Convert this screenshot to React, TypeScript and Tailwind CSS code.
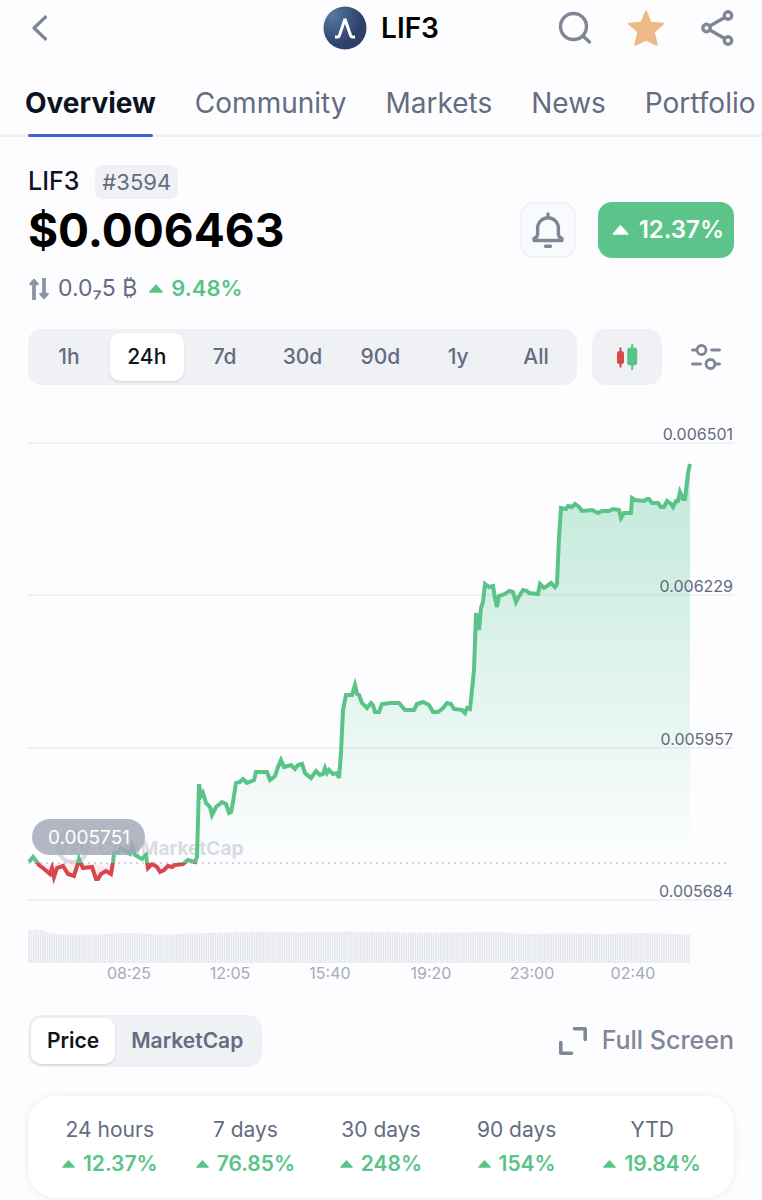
import { useState } from 'react';

const GREEN = '#5ac488';
const RED = '#d9474b';
const BASELINE = 863;

const tabs = ['Overview', 'Community', 'Markets', 'News', 'Portfolio'];
const ranges = ['1h', '24h', '7d', '30d', '90d', '1y', 'All'];

const gridLines = [
  { y: 443, label: '0.006501' },
  { y: 595, label: '0.006229' },
  { y: 748, label: '0.005957' },
  { y: 900, label: '0.005684' },
];

const times = [
  { x: 129, label: '08:25' },
  { x: 230, label: '12:05' },
  { x: 330, label: '15:40' },
  { x: 431, label: '19:20' },
  { x: 532, label: '23:00' },
  { x: 633, label: '02:40' },
];

const performance = [
  { period: '24 hours', change: '12.37%' },
  { period: '7 days', change: '76.85%' },
  { period: '30 days', change: '248%' },
  { period: '90 days', change: '154%' },
  { period: 'YTD', change: '19.84%' },
];

const points =
  '29,862 33,857 37,862 39,865 43,868 50,874 52,868 54,877 57,868 63,866 68,874 74,876 78,863 79,859 81,864 83,868 92,867 96,879 98,879 101,874 106,871 111,874 113,862 114,853 118,852 121,848 125,851 130,854 132,846 135,855 142,859 146,855 147,862 148,868 152,864 157,867 160,872 164,870 168,866 172,867 175,865 183,864 188,860 195,862 197,857 ' +
  '199,784 201,796 203,793 206,803 210,807 212,815 216,807 222,802 226,804 229,813 231,812 233,802 236,783 240,782 243,779 247,783 254,780 256,772 267,772 270,780 275,776 278,767 281,760 284,767 291,765 295,769 298,765 302,764 305,773 311,778 316,771 320,775 323,774 325,768 327,773 329,770 333,774 337,773 339,778 341,753 343,710 346,695 352,695 355,685 357,694 359,695 362,703 367,708 371,703 373,705 375,712 379,712 382,704 390,703 399,703 405,710 414,710 417,704 423,702 429,705 433,712 438,712 443,708 447,703 451,704 454,709 462,710 465,713 467,708 470,709 472,690 474,670 ' +
  '476,613 479,630 481,608 483,602 485,584 489,587 493,586 495,598 497,607 499,596 505,594 509,591 513,592 516,602 518,598 523,590 527,591 529,593 538,594 540,584 544,588 547,586 551,583 555,587 557,584 559,537 561,508 566,509 568,506 572,507 575,504 579,507 582,511 592,510 598,513 602,511 609,511 613,509 619,510 621,518 624,513 631,513 632,498 635,500 644,501 647,499 649,499 652,503 658,503 661,507 664,507 667,501 671,504 673,507 676,501 678,501 680,492 683,499 685,499 688,473 690,464';

const area = `29,${BASELINE} ${points} 690,${BASELINE}`;

const volumeProfile = [
  [28, 930], [44, 930], [48, 933], [60, 934.5], [90, 934.5], [125, 933], [165, 934.5], [205, 933], [265, 931.5],
  [300, 932.5], [345, 931.5], [400, 932.5], [470, 932.5], [490, 931.5], [525, 934], [560, 933.5], [610, 934], [640, 933], [690, 934.5],
];

function volumeTop(x: number) {
  for (let i = 1; i < volumeProfile.length; i++) {
    const [x0, y0] = volumeProfile[i - 1];
    const [x1, y1] = volumeProfile[i];
    if (x <= x1) return y0 + ((y1 - y0) * (x - x0)) / (x1 - x0);
  }
  return 934;
}

const bars = Array.from({ length: 288 }, (_, i) => 28.3 + i * 2.3);

function UpArrow({ className }: { className: string }) {
  return (
    <svg viewBox="0 0 16 10" className={className} fill="currentColor" aria-hidden="true">
      <path d="M7.300.6a1 1 0 0 1 1.400 0l7 7.900c.5.600.2 1.300-.6 1.300H.9c-.8 0-1.100-.7-.6-1.300z" />
    </svg>
  );
}

function PriceChart() {
  return (
    <svg viewBox="0 385 762 605" className="block w-full" role="img" aria-label="LIF3 price, last 24 hours">
      <defs>
        <linearGradient id="gain" gradientUnits="userSpaceOnUse" x1="0" y1="464" x2="0" y2={BASELINE}>
          <stop offset="0" stopColor="#58c795" stopOpacity="0.37" />
          <stop offset="1" stopColor="#58c795" stopOpacity="0" />
        </linearGradient>
        <linearGradient id="loss" gradientUnits="userSpaceOnUse" x1="0" y1={BASELINE} x2="0" y2="880">
          <stop offset="0" stopColor={RED} stopOpacity="0.03" />
          <stop offset="1" stopColor={RED} stopOpacity="0.25" />
        </linearGradient>
        <clipPath id="above">
          <rect x="0" y="385" width="762" height={BASELINE - 385} />
        </clipPath>
        <clipPath id="below">
          <rect x="0" y={BASELINE} width="762" height="100" />
        </clipPath>
      </defs>

      {gridLines.map((g) => (
        <line key={g.y} x1="28" x2="734" y1={g.y} y2={g.y} stroke="#eff1f4" strokeWidth="2" />
      ))}

      <g fill="none" stroke="#d9dbe3" strokeWidth="4" strokeLinecap="round" strokeLinejoin="round">
        <path d="M85 856a15 15 0 1 1 3-8c0 5-6 5-6 0v-5c0-3-3-3-4 0l-4 8-3-8c-1-3-3-3-4 0l-4 9" />
      </g>
      <text x="98" y="855" fill="#d9dbe3" className="text-[19px] font-bold">CoinMarketCap</text>

      <polygon points={area} fill="url(#gain)" clipPath="url(#above)" />
      <polygon points={area} fill="url(#loss)" clipPath="url(#below)" />
      <line x1="28" x2="727" y1={BASELINE} y2={BASELINE} stroke="#c3c7d0" strokeWidth="1.500" strokeDasharray="2 4" />
      <g fill="none" strokeWidth="4" strokeLinejoin="miter">
        <polyline points={points} stroke={GREEN} clipPath="url(#above)" />
        <polyline points={points} stroke={RED} clipPath="url(#below)" />
      </g>

      {gridLines.map((g) => (
        <text key={g.label} x="733" y={g.y - 3} textAnchor="end" fill="#616a7e" className="text-[16px]">
          {g.label}
        </text>
      ))}

      <rect x="32" y="819" width="113" height="36" rx="18" fill="#a2a7b6" fillOpacity="0.82" />
      <text x="89" y="844" textAnchor="middle" fill="#ffffff" className="text-[19px]">0.005751</text>

      {bars.map((x) => {
        const top = volumeTop(x);
        return <rect key={x} x={x} y={top} width="1.600" height={963 - top} fill="#e4e7ec" />;
      })}
      {times.map((t) => (
        <text key={t.label} x={t.x} y="979" textAnchor="middle" fill="#a4abba" className="text-[16px]">
          {t.label}
        </text>
      ))}
    </svg>
  );
}

export default function App() {
  const [tab, setTab] = useState('Overview');
  const [range, setRange] = useState('24h');
  const [metric, setMetric] = useState('Price');

  return (
    <div className="min-h-screen overflow-hidden bg-[#fdfdff] font-['Inter','Liberation_Sans',sans-serif] text-[#646c80]">
      <header className="grid h-14 grid-cols-[1fr_auto_1fr] items-center px-7 text-[#7f8797]">
        <button aria-label="Back" className="w-6">
          <svg viewBox="0 0 24 32" className="h-8 w-6" fill="none" stroke="currentColor" strokeWidth="3.200" strokeLinecap="round" strokeLinejoin="round">
            <path d="M17.500 5 6 16l11.500 11" />
          </svg>
        </button>
        <div className="flex items-center gap-[14px]">
          <svg viewBox="0 0 44 44" className="size-11" aria-hidden="true">
            <defs>
              <radialGradient id="coin" cx="0.200" cy="0.200" r="0.700">
                <stop offset="0" stopColor="#567a9f" />
                <stop offset="1" stopColor="#2d416b" />
              </radialGradient>
            </defs>
            <circle cx="22" cy="22" r="21.500" fill="url(#coin)" />
            <path d="M12 31h2.500c1 0 1.500-.5 1.800-1.300L22 13l5.700 16.700c.3.800.8 1.300 1.800 1.300H32" fill="none" stroke="#fff" strokeWidth="3" strokeLinejoin="bevel" />
          </svg>
          <h1 className="text-[28px] font-semibold text-black">LIF3</h1>
        </div>
        <div className="flex items-center justify-end gap-9">
          <button aria-label="Search">
            <svg viewBox="0 0 34 34" className="size-[34px]" fill="none" stroke="currentColor" strokeWidth="3.400" strokeLinecap="round">
              <circle cx="15.500" cy="15.500" r="13" />
              <path d="m25 25 6.500 6" />
            </svg>
          </button>
          <button aria-label="Remove from watchlist">
            <svg viewBox="0 0 36 36" className="size-9" fill="#ecb987" stroke="#ecb987" strokeWidth="2" strokeLinejoin="round">
              <path d="m18 1.500 4.700 11.300 12.300.9-9.300 8.100 3 13L18 29.500l-10.700 5.300 3-13L1 13.700l12.300-.9z" />
            </svg>
          </button>
          <button aria-label="Share">
            <svg viewBox="0 0 34 36" className="h-9 w-[34px]" fill="none" stroke="currentColor" strokeWidth="3.400">
              <circle cx="6.500" cy="18" r="3.700" />
              <circle cx="28" cy="5.500" r="3.700" />
              <circle cx="28" cy="30.500" r="3.700" />
              <path d="M9.800 16 24.700 7.500M9.800 20l14.900 8.500" />
            </svg>
          </button>
        </div>
      </header>

      <nav className="flex h-[81px] gap-[39px] border-b-[3px] border-[#eff1f4] pl-[25px] whitespace-nowrap">
        {tabs.map((t) => (
          <button
            key={t}
            onClick={() => setTab(t)}
            className={`relative pt-4 text-[28px] ${t === tab ? 'font-bold text-[#0d1421]' : ''}`}
          >
            {t}
            {t === tab && <span className="absolute inset-x-[3px] -bottom-[3px] h-[3px] rounded-full bg-[#4461da]" />}
          </button>
        ))}
      </nav>

      <main>
        <section className="px-7 pt-7">
          <div className="flex h-[34px] items-center gap-4">
            <h2 className="text-[25px] font-medium text-[#0d1421]">LIF3</h2>
            <span className="flex h-[34px] items-center rounded-lg bg-[#eff1f5] px-[7px] text-[22px]">#3594</span>
          </div>
          <div className="mt-[3px] flex items-center">
            <p className="flex-1 text-[46px] leading-[56px] font-bold text-black">$0.006463</p>
            <button aria-label="Price alerts" className="flex size-14 items-center justify-center rounded-[14px] border-2 border-[#f0f2f5] bg-[#f9fafd] text-[#7f8797]">
              <svg viewBox="0 0 34 36" className="h-9 w-[34px] shrink-0" fill="none" stroke="currentColor" strokeWidth="3.400" strokeLinecap="round" strokeLinejoin="round">
                <path d="M17 5V2M6.600 22V16.200a10.400 10.400 0 0 1 20.800 0V22c0 2 .8 3.400 3.600 4.600v1.900H3v-1.900C5.800 25.400 6.600 24 6.600 22z" />
                <path d="M14.500 34.300h5" />
              </svg>
            </button>
            <p className="ml-[22px] flex h-14 items-center gap-[10px] rounded-[14px] bg-[#5cc48a] pr-[10px] pl-[14px] text-[24px] font-semibold text-white">
              <UpArrow className="h-[10px] w-[17px]" />
              12.37%
            </p>
          </div>
          <div className="mt-[14px] flex h-[33px] items-center text-[23px]">
            <svg viewBox="0 0 22 24" className="mr-2 h-6 w-[22px]" fill="none" stroke="#8c94a6" strokeWidth="3.800" strokeLinejoin="round" aria-hidden="true">
              <path d="M6 23V6M16 1v17" />
              <path d="M6 3 2.500 7h7zM16 21l-3.500-4h7z" fill="#8c94a6" strokeWidth="2.500" />
            </svg>
            <span>0.0₇5 ₿</span>
            <span className="ml-3 flex items-center gap-2 text-[22px] font-semibold text-[#5ac488]">
              <UpArrow className="h-[9px] w-[14px]" />
              9.48%
            </span>
          </div>

          <div className="mt-6 flex gap-[15px]">
            <div className="grid h-14 flex-1 grid-cols-7 items-center rounded-[14px] bg-[#eff1f5] px-[2px]">
              {ranges.map((r) => (
                <button
                  key={r}
                  onClick={() => setRange(r)}
                  className={`mx-[2px] h-12 rounded-[10px] text-[21px] font-medium ${r === range ? 'bg-white text-[#0d1421] shadow-sm' : ''}`}
                >
                  {r}
                </button>
              ))}
            </div>
            <button aria-label="Candlestick chart" className="flex w-[70px] items-center justify-center rounded-[14px] bg-[#eff1f5]">
              <svg viewBox="0 0 22 28" className="h-7 w-[22px]">
                <path d="M3.500 4.500h2v20h-2z" fill={RED} />
                <rect x="1" y="8" width="7" height="13" rx="2.500" fill={RED} />
                <path d="M15.200 1h2v26h-2z" fill={GREEN} />
                <rect x="11.200" y="4.500" width="10" height="18" rx="3" fill={GREEN} />
              </svg>
            </button>
            <button aria-label="Chart settings" className="flex w-[57px] items-center justify-center text-[#7f8797]">
              <svg viewBox="0 0 30 28" className="h-7 w-[30px]" fill="none" stroke="currentColor" strokeWidth="2.800" strokeLinecap="round">
                <circle cx="10.500" cy="7" r="4.500" />
                <circle cx="19.500" cy="21" r="4.500" />
                <path d="M1.500 7H6M20.500 7h8M1.500 21h8M24 21h4.500" />
              </svg>
            </button>
          </div>
        </section>

        <PriceChart />

        <section className="px-7 pt-[25px]">
          <div className="flex items-center justify-between">
            <div className="flex h-[52px] items-center rounded-[14px] bg-[#eff1f5] px-[3px]">
              {['Price', 'MarketCap'].map((m) => (
                <button
                  key={m}
                  onClick={() => setMetric(m)}
                  className={`h-[46px] rounded-[10px] px-4 text-[21px] font-semibold ${m === metric ? 'bg-white text-[#0d1421] shadow-sm' : ''}`}
                >
                  {m}
                </button>
              ))}
            </div>
            <button className="flex items-center gap-[14px] text-[25px] font-medium text-[#7f8797]">
              <svg viewBox="0 0 30 30" className="size-[30px]" fill="none" stroke="currentColor" strokeWidth="3.600" strokeLinecap="round" strokeLinejoin="round">
                <path d="M16.500 2.800H27.200V13.500M2.800 16.500V27.200H13.500" />
              </svg>
              Full Screen
            </button>
          </div>

          <dl className="mt-[29px] grid h-[102px] grid-cols-5 items-center rounded-[28px] bg-white px-[14px] text-center shadow-[0_0_6px_rgba(88,102,126,0.12)]">
            {performance.map((p) => (
              <div key={p.period} className="flex flex-col gap-1">
                <dt className="text-[21px] leading-[30px]">{p.period}</dt>
                <dd className="flex items-center justify-center gap-2 text-[21px] leading-[30px] font-semibold text-[#5ac488]">
                  <UpArrow className="h-2 w-[13px]" />
                  {p.change}
                </dd>
              </div>
            ))}
          </dl>
        </section>
      </main>
    </div>
  );
}
